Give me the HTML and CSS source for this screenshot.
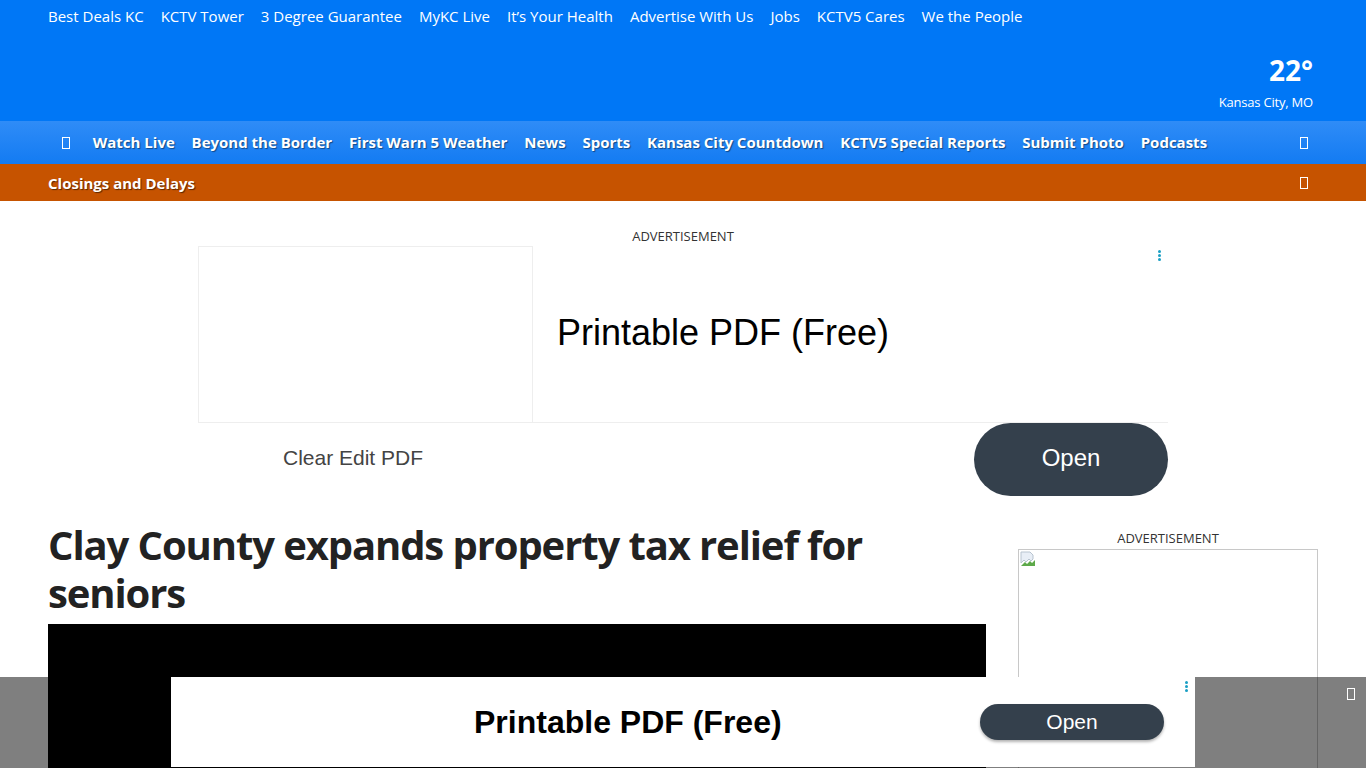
FILE: index.html
```html
<html>
<head>
  <title>Clay County expands property tax relief for seniors</title>
  <link rel="stylesheet" href="styles.css">
</head>
<body>
  <div id="topbar">
    <div class="util-links">
      <a href="#">Best Deals KC</a>
      <a href="#">KCTV Tower</a>
      <a href="#">3 Degree Guarantee</a>
      <a href="#">MyKC Live</a>
      <a href="#">It’s Your Health</a>
      <a href="#">Advertise With Us</a>
      <a href="#">Jobs</a>
      <a href="#">KCTV5 Cares</a>
      <a href="#">We the People</a>
    </div>
    <div class="weather">
      <div class="temp">22°</div>
      <div class="city">Kansas City, MO</div>
    </div>
  </div>

  <div id="mainnav">
    <span class="tofu"></span>
    <a href="#">Watch Live</a>
    <a href="#">Beyond the Border</a>
    <a href="#">First Warn 5 Weather</a>
    <a href="#">News</a>
    <a href="#">Sports</a>
    <a href="#">Kansas City Countdown</a>
    <a href="#">KCTV5 Special Reports</a>
    <a href="#">Submit Photo</a>
    <a href="#">Podcasts</a>
    <span class="spacer"></span>
    <span class="tofu"></span>
  </div>

  <div id="alertbar">
    <a href="#">Closings and Delays</a>
    <span class="tofu"></span>
  </div>

  <div class="ad-top">
    <div class="ad-label">ADVERTISEMENT</div>
    <div class="ad-box">
      <div class="ad-thumb"></div>
      <div class="ad-title">Printable PDF (Free)</div>
      <span class="ad-dots"><i></i><i></i><i></i></span>
    </div>
    <div class="ad-cta">
      <span class="ad-brand">Clear Edit PDF</span>
      <span class="btn-open">Open</span>
    </div>
  </div>

  <div id="content">
    <div class="main-col">
      <h1 class="headline">Clay County expands property tax relief for seniors</h1>
      <div class="video"></div>
    </div>
    <div class="side-col">
      <div class="ad-label">ADVERTISEMENT</div>
      <div class="side-box">
        <svg class="broken" width="16" height="16" viewBox="0 0 16 16">
          <path d="M1 1h9l3 3v4l-2 2-2-2-3 3-2-2-3 3z" fill="#e8eef6" stroke="#b8c4d0" stroke-width="1"/>
          <path d="M1 15l4-4 2 2 3-3 2 2 3-3v6z" fill="#5da94a"/>
        </svg>
      </div>
    </div>
  </div>

  <div id="sticky-ad">
    <div class="sticky-inner">
      <div class="sticky-title">Printable PDF (Free)</div>
      <span class="sticky-open">Open</span>
      <span class="ad-dots sticky-dots"><i></i><i></i><i></i></span>
    </div>
    <span class="tofu sticky-close"></span>
  </div>
</body>
</html>
```

FILE: styles.css
```css
html, body {
  margin: 0;
  background: #fff;
  font-family: "Open Sans", "Noto Sans", sans-serif;
  color: #222;
}
a {
  color: #fff;
  text-decoration: none;
}

/* top utility bar */
#topbar {
  height: 121px;
  background: #0077f6;
  padding: 0 53px 0 48px;
  box-sizing: border-box;
  display: flex;
  flex-direction: column;
}
.util-links {
  display: flex;
  gap: 17px;
  padding-top: 6px;
  font-size: 15px;
}
.weather {
  margin-top: auto;
  padding-bottom: 10px;
  text-align: right;
  color: #fff;
}
.temp {
  font-size: 28px;
  font-weight: 700;
  line-height: 32px;
}
.city {
  font-size: 13px;
  letter-spacing: -0.2px;
  margin-top: 7px;
}

/* main nav */
#mainnav {
  height: 43px;
  background: linear-gradient(#2f8cf7, #137bf2);
  display: flex;
  align-items: center;
  gap: 16.8px;
  padding: 0 58px 0 62px;
  font-size: 15px;
  font-weight: 700;
}
#mainnav a {
  text-shadow: 1px 1px 1px rgba(0,0,0,0.45);
  margin-top: -1px;
}
#mainnav .spacer {
  flex: 1;
}
.tofu {
  display: inline-block;
  width: 6px;
  height: 10px;
  border: 1px solid #fff;
}
#mainnav .tofu + a {
  margin-left: 6px;
}

#alertbar {
  height: 37px;
  background: #c65300;
  display: flex;
  align-items: center;
  justify-content: space-between;
  padding: 0 58px 0 48px;
  font-size: 15px;
  font-weight: 700;
}
#alertbar a {
  text-shadow: 1px 1px 1px rgba(0,0,0,0.55);
}

/* top ad */
.ad-top {
  width: 970px;
  margin: 26px auto 0;
}
.ad-label {
  font-size: 13px;
  text-align: center;
  color: #333;
  line-height: 19px;
}
.ad-box {
  position: relative;
  height: 176px;
  display: flex;
  align-items: center;
  border-bottom: 1px solid #eee;
}
.ad-thumb {
  width: 335px;
  height: 100%;
  box-sizing: border-box;
  border: 1px solid #eee;
  border-bottom: 0;
}
.ad-title {
  margin-left: 24px;
  font-family: "Liberation Sans", Arial, sans-serif;
  font-size: 36px;
  color: #000;
  margin-top: -2px;
}
.ad-dots {
  position: absolute;
  right: 7px;
  top: 4px;
  display: flex;
  flex-direction: column;
  gap: 1px;
}
.ad-dots i {
  width: 3px;
  height: 3px;
  border-radius: 50%;
  background: #1a9fc4;
}
.ad-cta {
  display: flex;
  align-items: center;
  justify-content: space-between;
  padding-left: 85px;
}
.ad-brand {
  font-family: "Liberation Sans", Arial, sans-serif;
  font-size: 21px;
  color: #444;
  margin-top: -3px;
}
.btn-open {
  width: 194px;
  height: 73px;
  border-radius: 37px;
  background: #34404c;
  color: #fff;
  font-family: "Liberation Sans", Arial, sans-serif;
  font-size: 24px;
  display: flex;
  align-items: center;
  justify-content: center;
  padding-bottom: 3px;
  box-sizing: border-box;
}

/* article */
#content {
  display: flex;
  gap: 32px;
  padding: 25px 48px 0;
}
.main-col {
  width: 938px;
}
.headline {
  margin: 0;
  font-size: 40px;
  line-height: 48px;
  font-weight: 700;
  letter-spacing: -1.1px;
  color: #222;
}
.video {
  margin-top: 7px;
  height: 400px;
  background: #000;
}
.side-col {
  width: 300px;
  padding-top: 8px;
}
.side-box {
  margin-top: 1px;
  height: 300px;
  border: 1px solid #c8c8c8;
  box-sizing: border-box;
  padding: 1px;
}
.broken {
  display: block;
}

/* sticky bottom ad */
#sticky-ad {
  position: fixed;
  left: 0;
  right: 0;
  bottom: 0;
  height: 91px;
  background: rgba(0,0,0,0.5);
}
.sticky-inner {
  position: relative;
  width: 1024px;
  height: 90px;
  margin: 0 auto;
  background: #fff;
  display: flex;
  align-items: center;
}
.sticky-title {
  font-family: "Liberation Sans", Arial, sans-serif;
  font-weight: 700;
  font-size: 32px;
  color: #000;
  margin-left: 303px;
}
.sticky-open {
  margin-left: auto;
  margin-right: 31px;
  width: 184px;
  height: 36px;
  border-radius: 18px;
  background: #34404c;
  color: #fff;
  font-family: "Liberation Sans", Arial, sans-serif;
  font-size: 21px;
  display: flex;
  align-items: center;
  justify-content: center;
  box-shadow: 0 2px 3px rgba(0,0,0,0.3);
}
.sticky-dots {
  right: 7px;
  top: 4px;
}
.sticky-close {
  position: absolute;
  right: 11px;
  top: 11px;
  border-color: #fff;
}
```
